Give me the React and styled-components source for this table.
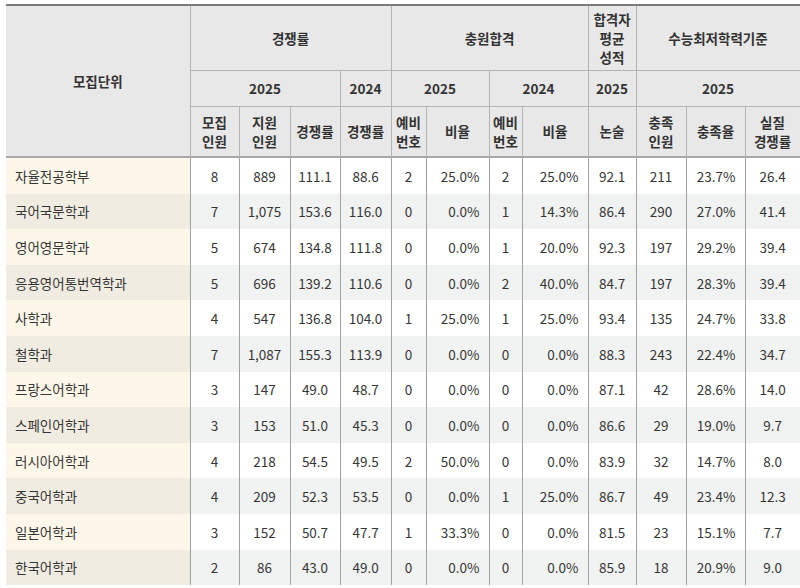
import React from "react";
import styled, { createGlobalStyle } from "styled-components";

const GlobalStyle = createGlobalStyle`
  body {
    margin: 0;
    background: #fff;
    font-family: "Noto Sans CJK KR", "Noto Sans", sans-serif;
    color: #333;
  }
`;

const Wrap = styled.div`
  padding: 4px 0 0 6px;
  overflow: hidden;
  height: 588px;
  box-sizing: border-box;
`;

const Table = styled.table`
  width: 794px;
  table-layout: fixed;
  border-collapse: collapse;
  border-top: 2px solid #7a7a7a;
  font-size: 13.5px;
`;

const Th = styled.th`
  background: #e8e8e8;
  font-weight: 700;
  font-size: 13.5px;
  color: #333;
  line-height: 19px;
  padding: 0;
  height: ${(p) => p.$h || 35}px;
  border: 1px solid #b4b4b4;
  border-top: none;
  border-bottom: ${(p) => (p.$last ? "2px solid #a8a8a8" : "1px solid #b4b4b4")};
  &:first-child {
    border-left: none;
  }
`;

const Row = styled.tr`
  background: ${(p) => (p.$alt ? "#f1f2f2" : "#fff")};
`;

const Td = styled.td`
  height: 35.6px;
  padding: 0 ${(p) => (p.$right ? "9px" : "0")} 0 0;
  text-align: ${(p) => (p.$right ? "right" : "center")};
  border-left: 1px solid #a0a0a0;
  border-right: 1px solid #a0a0a0;
  color: #363636;
  white-space: nowrap;
`;

const NameTd = styled.td`
  padding: 0 0 0 9px;
  text-align: left;
  background: ${(p) => (p.$alt ? "#f1ece2" : "#fdf7e9")};
  border-right: 1px solid #a0a0a0;
  color: #363636;
`;

const widths = [184, 49, 51, 50, 51, 35, 63, 33, 66, 48, 50, 59, 55];
const rightCols = [5, 7, 10];

const rows = [
  ["자율전공학부", "8", "889", "111.1", "88.6", "2", "25.0%", "2", "25.0%", "92.1", "211", "23.7%", "26.4"],
  ["국어국문학과", "7", "1,075", "153.6", "116.0", "0", "0.0%", "1", "14.3%", "86.4", "290", "27.0%", "41.4"],
  ["영어영문학과", "5", "674", "134.8", "111.8", "0", "0.0%", "1", "20.0%", "92.3", "197", "29.2%", "39.4"],
  ["응용영어통번역학과", "5", "696", "139.2", "110.6", "0", "0.0%", "2", "40.0%", "84.7", "197", "28.3%", "39.4"],
  ["사학과", "4", "547", "136.8", "104.0", "1", "25.0%", "1", "25.0%", "93.4", "135", "24.7%", "33.8"],
  ["철학과", "7", "1,087", "155.3", "113.9", "0", "0.0%", "0", "0.0%", "88.3", "243", "22.4%", "34.7"],
  ["프랑스어학과", "3", "147", "49.0", "48.7", "0", "0.0%", "0", "0.0%", "87.1", "42", "28.6%", "14.0"],
  ["스페인어학과", "3", "153", "51.0", "45.3", "0", "0.0%", "0", "0.0%", "86.6", "29", "19.0%", "9.7"],
  ["러시아어학과", "4", "218", "54.5", "49.5", "2", "50.0%", "0", "0.0%", "83.9", "32", "14.7%", "8.0"],
  ["중국어학과", "4", "209", "52.3", "53.5", "0", "0.0%", "1", "25.0%", "86.7", "49", "23.4%", "12.3"],
  ["일본어학과", "3", "152", "50.7", "47.7", "1", "33.3%", "0", "0.0%", "81.5", "23", "15.1%", "7.7"],
  ["한국어학과", "2", "86", "43.0", "49.0", "0", "0.0%", "0", "0.0%", "85.9", "18", "20.9%", "9.0"],
];

const App = () => {
  return (
    <Wrap>
      <GlobalStyle />
      <Table>
        <colgroup>
          {widths.map((w, i) => (
            <col key={i} style={{ width: w }} />
          ))}
        </colgroup>
        <thead>
          <tr>
            <Th rowSpan={3} $last>모집단위</Th>
            <Th colSpan={4} $h={64}>경쟁률</Th>
            <Th colSpan={4} $h={64}>충원합격</Th>
            <Th $h={64}>
              합격자
              <br />
              평균
              <br />
              성적
            </Th>
            <Th colSpan={3} $h={64}>수능최저학력기준</Th>
          </tr>
          <tr>
            <Th colSpan={3} $h={35}>2025</Th>
            <Th $h={35}>2024</Th>
            <Th colSpan={2} $h={35}>2025</Th>
            <Th colSpan={2} $h={35}>2024</Th>
            <Th $h={35}>2025</Th>
            <Th colSpan={3} $h={35}>2025</Th>
          </tr>
          <tr>
            <Th $h={49} $last>모집<br />인원</Th>
            <Th $h={49} $last>지원<br />인원</Th>
            <Th $h={49} $last>경쟁률</Th>
            <Th $h={49} $last>경쟁률</Th>
            <Th $h={49} $last>예비<br />번호</Th>
            <Th $h={49} $last>비율</Th>
            <Th $h={49} $last>예비<br />번호</Th>
            <Th $h={49} $last>비율</Th>
            <Th $h={49} $last>논술</Th>
            <Th $h={49} $last>충족<br />인원</Th>
            <Th $h={49} $last>충족율</Th>
            <Th $h={49} $last>실질<br />경쟁률</Th>
          </tr>
        </thead>
        <tbody>
          {rows.map((r, i) => (
            <Row key={r[0]} $alt={i % 2 === 1}>
              <NameTd $alt={i % 2 === 1}>{r[0]}</NameTd>
              {r.slice(1).map((v, j) => (
                <Td key={j} $right={rightCols.includes(j)}>
                  {v}
                </Td>
              ))}
            </Row>
          ))}
        </tbody>
      </Table>
    </Wrap>
  );
};

export default App;
